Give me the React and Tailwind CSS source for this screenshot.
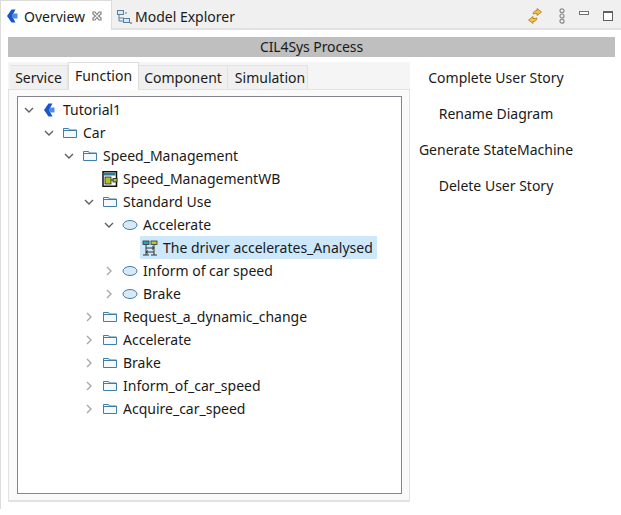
const font = { fontFamily: '"Noto Sans", sans-serif' };

function Chevron({ open }) {
  return (
    <svg width="12" height="12" viewBox="0 0 12 12" className="shrink-0" fill="none" stroke={open ? "#5f5f5f" : "#a8a8a8"} strokeWidth="1.4">
      {open ? <path d="M2 4 L6 8 L10 4" /> : <path d="M4 2 L8 6 L4 10" />}
    </svg>
  );
}
function Folder() {
  return (
    <svg width="16" height="16" viewBox="0 0 16 16" className="shrink-0" fill="none">
      <path d="M1.5 12.5 V3.5 H6.5 L7.5 5 H14.5 V12.5 Z" fill="#f4f9fd" stroke="#3f7fa9" />
      <path d="M1.5 5.5 H14.5" stroke="#3f7fa9" />
    </svg>
  );
}
function Ellipse() {
  return (
    <svg width="16" height="16" viewBox="0 0 16 16" className="shrink-0" fill="none">
      <ellipse cx="8" cy="8" rx="7" ry="4.5" fill="#d9e8f5" stroke="#3f7fa9" />
    </svg>
  );
}
function Logo() {
  return (
    <svg width="12" height="14" viewBox="0 0 12 14" className="shrink-0">
      <path d="M4.5 0.5 H8.5 L5 7 L8.5 13.5 H4.5 L0 7 Z" fill="#1a56c8" />
      <path d="M6 4.5 H10.5 V9.5 H6 L4.8 7 Z" fill="#4d8de6" />
    </svg>
  );
}
function Workbench() {
  return (
    <svg width="16" height="16" viewBox="0 0 16 16" className="shrink-0">
      <rect x="1" y="0.75" width="13.5" height="14.5" fill="#fff" stroke="#111" strokeWidth="1.5" />
      <rect x="2" y="2" width="11.5" height="2.5" fill="#1f7f95" />
      <rect x="3" y="6" width="6" height="7" fill="#a8c62a" stroke="#222" strokeWidth="0.8" />
      <path d="M9 9 H11" stroke="#222" />
      <rect x="11" y="7.5" width="4" height="3.5" fill="#a2c426" stroke="#222" strokeWidth="0.8" />
    </svg>
  );
}
function Diagram() {
  return (
    <svg width="16" height="16" viewBox="0 0 16 16" className="shrink-0" fill="none">
      <rect x="1" y="1" width="6" height="3.5" fill="#2aa3b8" stroke="#333" strokeWidth="0.8" />
      <rect x="9" y="1" width="6" height="3.5" fill="#b4cc2a" stroke="#333" strokeWidth="0.8" />
      <path d="M4 5 V15 M12 5 V15 M1 15 H7 M9 15 H15 M4 8 H12 M10 6.5 L12 8 L10 9.5 M12 12 H4 M6 10.5 L4 12 L6 13.5" stroke="#333" strokeWidth="1" />
    </svg>
  );
}
function ExplorerIcon() {
  return (
    <svg width="16" height="16" viewBox="0 0 16 16" className="shrink-0" fill="none">
      <rect x="1.5" y="1.5" width="6" height="4" fill="#dbe9f5" stroke="#5a7f9e" />
      <path d="M3 6 V12 H7 M3 9 H8 M9 4 H11" stroke="#5a7f9e" />
      <rect x="7.5" y="9.5" width="6" height="4" fill="#dbe9f5" stroke="#5a7f9e" />
      <path d="M14 14 H16" stroke="#555" />
    </svg>
  );
}
function Sync() {
  return (
    <svg width="16" height="16" viewBox="0 0 16 16" className="shrink-0">
      <path d="M6 6 C6.5 3 8.5 2.5 10 2.5 V0.5 L14.5 4 L10 7.5 V5.5 C8.5 5.5 7.5 5.5 6 6 Z" fill="#f2c14e" stroke="#b07a10" strokeWidth="0.8" />
      <path d="M10 10 C9.5 13 7.5 13.5 6 13.5 V15.5 L1.5 12 L6 8.5 V10.5 C7.5 10.5 8.5 10.5 10 10 Z" fill="#f2c14e" stroke="#b07a10" strokeWidth="0.8" />
    </svg>
  );
}
function Link() {
  return (
    <svg width="8" height="16" viewBox="0 0 8 16" className="shrink-0" fill="none" stroke="#8a8a8a" strokeWidth="1.2">
      <circle cx="4" cy="2.8" r="2" /><circle cx="4" cy="8" r="2" /><circle cx="4" cy="13.2" r="2" />
    </svg>
  );
}

const rows = [
  { d: 0, c: "open", i: <Logo />, t: "Tutorial1" },
  { d: 1, c: "open", i: <Folder />, t: "Car" },
  { d: 2, c: "open", i: <Folder />, t: "Speed_Management" },
  { d: 3, c: "none", i: <Workbench />, t: "Speed_ManagementWB" },
  { d: 3, c: "open", i: <Folder />, t: "Standard Use" },
  { d: 4, c: "open", i: <Ellipse />, t: "Accelerate" },
  { d: 5, c: "none", i: <Diagram />, t: "The driver accelerates_Analysed", sel: true },
  { d: 4, c: "closed", i: <Ellipse />, t: "Inform of car speed" },
  { d: 4, c: "closed", i: <Ellipse />, t: "Brake" },
  { d: 3, c: "closed", i: <Folder />, t: "Request_a_dynamic_change" },
  { d: 3, c: "closed", i: <Folder />, t: "Accelerate" },
  { d: 3, c: "closed", i: <Folder />, t: "Brake" },
  { d: 3, c: "closed", i: <Folder />, t: "Inform_of_car_speed" },
  { d: 3, c: "closed", i: <Folder />, t: "Acquire_car_speed" },
];
const pad = ["pl-[5px]", "pl-[25px]", "pl-[45px]", "pl-[65px]", "pl-[85px]", "pl-[105px]"];

function Row({ r }) {
  return (
    <div className={`flex items-center h-[23px] ${pad[r.d]}`}>
      <span className="w-[12px] flex justify-center shrink-0">
        {r.c !== "none" && <Chevron open={r.c === "open"} />}
      </span>
      <span className={`ml-[5px] pl-[2px] pr-[4px] h-[23px] flex items-center whitespace-nowrap ${r.sel ? "bg-[#cce8fa]" : ""}`}>
        <span className="w-[16px] flex justify-center shrink-0 mr-[5px]">{r.i}</span>
        {r.t}
      </span>
    </div>
  );
}

const subTabs = [
  { t: "Service", w: "w-[58px]" },
  { t: "Function", w: "w-[71px]" },
  { t: "Component", w: "w-[89px]" },
  { t: "Simulation", w: "w-[80px] pl-[5px]" },
];

export default function App() {
  return (
    <div style={font} className="w-[621px] h-[515px] bg-white text-[14px] text-[#1a1a1a] overflow-hidden">
      <div className="h-[509px] border-l border-[#dcdcdc]">
        <div className="flex h-[30px] bg-[#f0f0f0] border-b-2 border-[#e2e2e2] items-stretch">
          <div className="w-[111px] -mb-[2px] bg-white border-r border-t border-[#dcdcdc] flex items-center pl-[6px] pt-[1px]">
            <Logo />
            <span className="ml-[5px]">Overview</span>
            <svg width="12" height="12" viewBox="0 0 12 12" className="ml-[6px]" fill="none" stroke="#808080" strokeWidth="1.2">
              <path d="M2 2 L4 2 L6 4.5 L8 2 L10 2 L10 4 L7.5 6 L10 8 L10 10 L8 10 L6 7.5 L4 10 L2 10 L2 8 L4.5 6 L2 4 Z" />
            </svg>
          </div>
          <div className="flex items-center pl-[4px] pt-[5px]">
            <ExplorerIcon />
            <span className="ml-[3px]">Model Explorer</span>
          </div>
          <div className="ml-auto flex items-center pt-[3px]">
            <Sync />
            <span className="ml-[15px] flex"><Link /></span>
            <span className="ml-[13px] w-[10px] h-[4px] border border-[#707070] bg-white -mt-[6px]" />
            <span className="ml-[14px] mr-[8px] w-[10px] h-[10px] border border-[#606060] border-t-2 bg-white" />
          </div>
        </div>

        <div className="pl-[7px] pr-[6px] pt-[7px]">
          <div className="h-[20px] bg-[#bfbfbf] text-center leading-[20px] tracking-[-0.1px]">CIL4Sys Process</div>
          <div className="flex mt-[5px]">
            <div className="w-[402px]">
              <div className="flex h-[27px] items-end pl-[2px] bg-[#f5f5f5]">
                {subTabs.map(({ t, w }) =>
                  t === "Function" ? (
                    <div key={t} className={`${w} h-[28px] bg-white border border-b-0 border-[#dddddd] text-center leading-[26px] -mb-[1px] z-10`}>{t}</div>
                  ) : (
                    <div key={t} className={`${w} h-[24px] bg-[#f0f0f0] border-r border-t border-[#e2e2e2] text-center leading-[23px]`}>{t}</div>
                  )
                )}
              </div>
              <div className="h-[413px] border border-[#e2e2e2] border-b-2 pl-[8px] pr-[7px] pt-[6px] bg-[#fafafa]">
                <div className="h-[398px] border border-[#85858d] bg-white pt-[1px]">
                  {rows.map((r, i) => <Row key={i} r={r} />)}
                </div>
              </div>
            </div>
            <div className="w-[172px] flex flex-col items-center pt-[5px]">
              {["Complete User Story", "Rename Diagram", "Generate StateMachine", "Delete User Story"].map((t) => (
                <div key={t} className="h-[36px] leading-[22px] whitespace-nowrap">{t}</div>
              ))}
            </div>
          </div>
        </div>
      </div>
    </div>
  );
}
